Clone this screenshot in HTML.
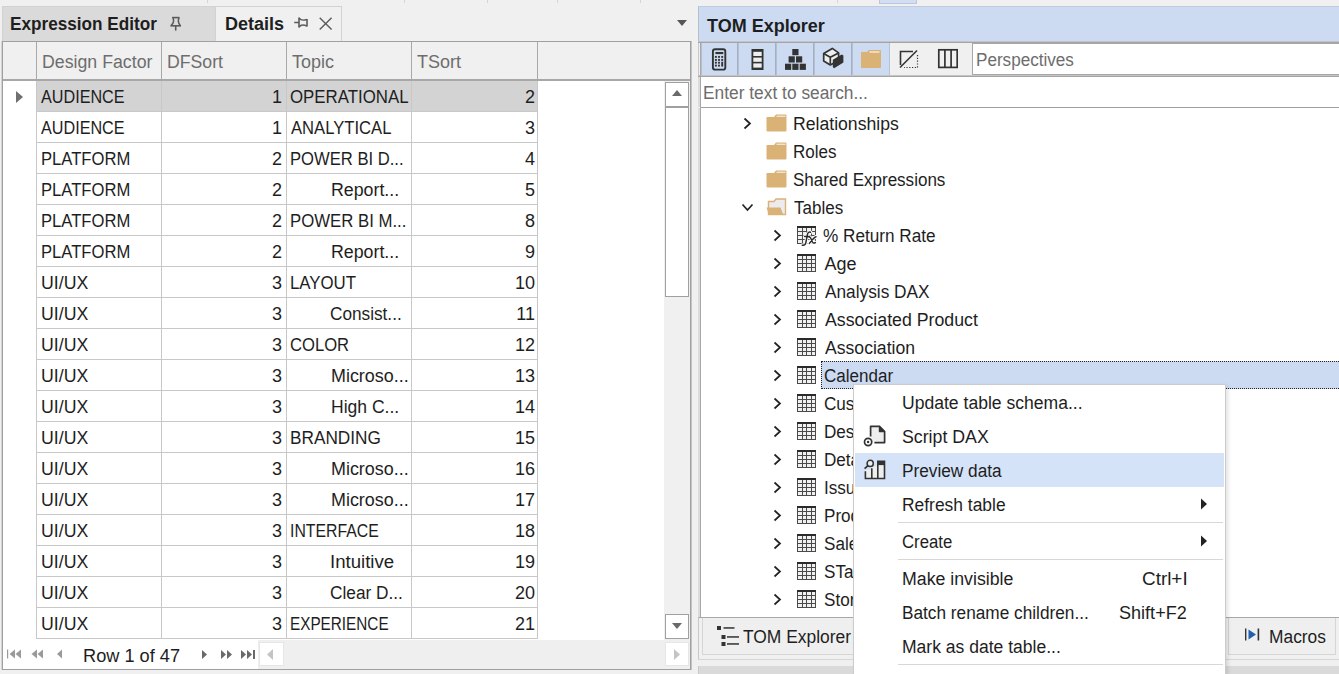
<!DOCTYPE html><html><head><meta charset="utf-8"><style>
*{box-sizing:border-box}
html,body{margin:0;padding:0}
body{width:1339px;height:674px;overflow:hidden;position:relative;background:#f0f0f0;font-family:"Liberation Sans", sans-serif;font-size:18px;color:#1e1e1e}
.ab{position:absolute}
.t{position:absolute;white-space:nowrap;line-height:30px;height:30px;margin-top:1px}
.hl{position:absolute;height:1px;background:#c8c8c8}
.vl{position:absolute;width:1px;background:#c8c8c8}
</style></head><body>

<div class="ab" style="left:207px;top:0;width:1px;height:3px;background:#d6d6d6"></div>
<div class="ab" style="left:404px;top:0;width:1px;height:3px;background:#d6d6d6"></div>
<div class="ab" style="left:487px;top:0;width:1px;height:3px;background:#d6d6d6"></div>
<div class="ab" style="left:557px;top:0;width:1px;height:3px;background:#d6d6d6"></div>
<div class="ab" style="left:640px;top:0;width:1px;height:3px;background:#d6d6d6"></div>
<div class="ab" style="left:837px;top:0;width:1px;height:3px;background:#d6d6d6"></div>
<div class="ab" style="left:879px;top:0;width:38px;height:4px;background:#d3def3;border:1px solid #b9c6de;border-top:none"></div>
<div class="ab" style="left:2px;top:6px;width:214px;height:35px;background:#dadada;border:1px solid #d2d2d2;border-bottom:none"></div>
<div class="ab" style="left:215px;top:6px;width:127px;height:35px;background:#f0f0f0;border:1px solid #d2d2d2;border-bottom:none"></div>
<div class="t" style="left:10.0px;top:8px;font-weight:bold;transform:scaleX(0.9542);transform-origin:0 0">Expression Editor</div>
<div class="t" style="left:225.0px;top:8px;font-weight:bold">Details</div>
<svg class="ab" style="left:168px;top:14px" width="16" height="18" viewBox="0 0 16 18"><path d="M4.1 3.6H11.6" stroke="#5a5a5a" stroke-width="1.6"/><path d="M5 4Q6.8 8 3.2 11.4M11 4Q9.2 8 12.3 11.4" fill="none" stroke="#5a5a5a" stroke-width="1.5"/><path d="M2.4 11.8H13" stroke="#5a5a5a" stroke-width="1.6"/><path d="M7.7 12V16.6" stroke="#5a5a5a" stroke-width="1.6"/></svg>
<svg class="ab" style="left:292px;top:14px" width="18" height="16" viewBox="0 0 18 16"><path d="M2.2 8.5H7" stroke="#5a5a5a" stroke-width="1.5"/><path d="M7 3.5V13.6" stroke="#5a5a5a" stroke-width="1.6"/><path d="M7 4Q9.5 7.5 15 5.3M7 13.2Q9.5 9.5 15 12.2" fill="none" stroke="#5a5a5a" stroke-width="1.4"/><path d="M15 5V12.5" stroke="#5a5a5a" stroke-width="1.6"/></svg>
<svg class="ab" style="left:318px;top:16px" width="16" height="16" viewBox="0 0 16 16"><path d="M1.7 1.7L13.6 13.5M13.6 1.7L1.7 13.5" stroke="#5a5a5a" stroke-width="1.4" fill="none"/></svg>
<svg class="ab" style="left:676px;top:19px" width="12" height="8" viewBox="0 0 12 8"><path d="M1 1h10L6 7z" fill="#555"/></svg>
<div class="ab" style="left:2px;top:41px;width:689px;height:629px;background:#ffffff;border:1px solid #a0a0a0;border-width:1px 1px 2px 1px;box-shadow:-1px 0 0 #d4d4d4, 1px 0 0 #c4c4c4"></div>
<div class="ab" style="left:3px;top:42px;width:687px;height:38px;background:#f0f0f0"></div>
<div class="ab" style="left:3px;top:79px;width:534px;height:2px;background:#a8a8a8"></div>
<div class="ab" style="left:537px;top:79px;width:153px;height:2px;background:#a8a8a8"></div>
<div class="ab" style="left:36px;top:42px;width:1px;height:38px;background:#a8a8a8"></div>
<div class="ab" style="left:161px;top:42px;width:1px;height:38px;background:#a8a8a8"></div>
<div class="ab" style="left:286px;top:42px;width:1px;height:38px;background:#a8a8a8"></div>
<div class="ab" style="left:411px;top:42px;width:1px;height:38px;background:#a8a8a8"></div>
<div class="ab" style="left:537px;top:42px;width:1px;height:38px;background:#a8a8a8"></div>
<div class="t" style="left:42.0px;top:46px;color:#6d6d6d;transform:scaleX(0.9855);transform-origin:0 0">Design Factor</div>
<div class="t" style="left:167.0px;top:46px;color:#6d6d6d;transform:scaleX(0.9818);transform-origin:0 0">DFSort</div>
<div class="t" style="left:292px;top:46px;color:#6d6d6d">Topic</div>
<div class="t" style="left:417px;top:46px;color:#6d6d6d">TSort</div>
<div class="ab" style="left:3px;top:81px;width:662px;height:559px;overflow:hidden">
<div class="ab" style="left:34px;top:0px;width:501px;height:30px;background:#d3d3d3"></div>
<div class="ab" style="left:33px;top:30px;width:501px;height:1px;background:#c8c8c8"></div>
<div class="t" style="left:38.0px;top:0px;;transform:scaleX(0.8984);transform-origin:0 0">AUDIENCE</div>
<div class="t" style="left:159px;top:0px;width:120px;text-align:right">1</div>
<div class="t" style="left:287.0px;top:0px;;transform:scaleX(0.936);transform-origin:0 0">OPERATIONAL</div>
<div class="t" style="left:409px;top:0px;width:123px;text-align:right">2</div>
<div class="ab" style="left:33px;top:61px;width:501px;height:1px;background:#c8c8c8"></div>
<div class="t" style="left:38.0px;top:31px;;transform:scaleX(0.8984);transform-origin:0 0">AUDIENCE</div>
<div class="t" style="left:159px;top:31px;width:120px;text-align:right">1</div>
<div class="t" style="left:288.0px;top:31px;;transform:scaleX(0.9237);transform-origin:0 0">ANALYTICAL</div>
<div class="t" style="left:409px;top:31px;width:123px;text-align:right">3</div>
<div class="ab" style="left:33px;top:92px;width:501px;height:1px;background:#c8c8c8"></div>
<div class="t" style="left:38.0px;top:62px;;transform:scaleX(0.9242);transform-origin:0 0">PLATFORM</div>
<div class="t" style="left:159px;top:62px;width:120px;text-align:right">2</div>
<div class="t" style="left:287.0px;top:62px;;transform:scaleX(0.9234);transform-origin:0 0">POWER BI D...</div>
<div class="t" style="left:409px;top:62px;width:123px;text-align:right">4</div>
<div class="ab" style="left:33px;top:123px;width:501px;height:1px;background:#c8c8c8"></div>
<div class="t" style="left:38.0px;top:93px;;transform:scaleX(0.9242);transform-origin:0 0">PLATFORM</div>
<div class="t" style="left:159px;top:93px;width:120px;text-align:right">2</div>
<div class="t" style="left:328.0px;top:93px;;transform:scaleX(0.9879);transform-origin:0 0">Report...</div>
<div class="t" style="left:409px;top:93px;width:123px;text-align:right">5</div>
<div class="ab" style="left:33px;top:154px;width:501px;height:1px;background:#c8c8c8"></div>
<div class="t" style="left:38.0px;top:124px;;transform:scaleX(0.9242);transform-origin:0 0">PLATFORM</div>
<div class="t" style="left:159px;top:124px;width:120px;text-align:right">2</div>
<div class="t" style="left:287.0px;top:124px;;transform:scaleX(0.9314);transform-origin:0 0">POWER BI M...</div>
<div class="t" style="left:409px;top:124px;width:123px;text-align:right">8</div>
<div class="ab" style="left:33px;top:185px;width:501px;height:1px;background:#c8c8c8"></div>
<div class="t" style="left:38.0px;top:155px;;transform:scaleX(0.9242);transform-origin:0 0">PLATFORM</div>
<div class="t" style="left:159px;top:155px;width:120px;text-align:right">2</div>
<div class="t" style="left:328.0px;top:155px;;transform:scaleX(0.9879);transform-origin:0 0">Report...</div>
<div class="t" style="left:409px;top:155px;width:123px;text-align:right">9</div>
<div class="ab" style="left:33px;top:216px;width:501px;height:1px;background:#c8c8c8"></div>
<div class="t" style="left:38.0px;top:186px;;transform:scaleX(0.9842);transform-origin:0 0">UI/UX</div>
<div class="t" style="left:159px;top:186px;width:120px;text-align:right">3</div>
<div class="t" style="left:287.0px;top:186px;;transform:scaleX(0.9344);transform-origin:0 0">LAYOUT</div>
<div class="t" style="left:409px;top:186px;width:123px;text-align:right">10</div>
<div class="ab" style="left:33px;top:247px;width:501px;height:1px;background:#c8c8c8"></div>
<div class="t" style="left:38.0px;top:217px;;transform:scaleX(0.9842);transform-origin:0 0">UI/UX</div>
<div class="t" style="left:159px;top:217px;width:120px;text-align:right">3</div>
<div class="t" style="left:327.0px;top:217px;;transform:scaleX(0.9556);transform-origin:0 0">Consist...</div>
<div class="t" style="left:409px;top:217px;width:123px;text-align:right">11</div>
<div class="ab" style="left:33px;top:278px;width:501px;height:1px;background:#c8c8c8"></div>
<div class="t" style="left:38.0px;top:248px;;transform:scaleX(0.9842);transform-origin:0 0">UI/UX</div>
<div class="t" style="left:159px;top:248px;width:120px;text-align:right">3</div>
<div class="t" style="left:287.0px;top:248px;;transform:scaleX(0.9233);transform-origin:0 0">COLOR</div>
<div class="t" style="left:409px;top:248px;width:123px;text-align:right">12</div>
<div class="ab" style="left:33px;top:309px;width:501px;height:1px;background:#c8c8c8"></div>
<div class="t" style="left:38.0px;top:279px;;transform:scaleX(0.9842);transform-origin:0 0">UI/UX</div>
<div class="t" style="left:159px;top:279px;width:120px;text-align:right">3</div>
<div class="t" style="left:328.0px;top:279px;;transform:scaleX(0.9948);transform-origin:0 0">Microso...</div>
<div class="t" style="left:409px;top:279px;width:123px;text-align:right">13</div>
<div class="ab" style="left:33px;top:340px;width:501px;height:1px;background:#c8c8c8"></div>
<div class="t" style="left:38.0px;top:310px;;transform:scaleX(0.9842);transform-origin:0 0">UI/UX</div>
<div class="t" style="left:159px;top:310px;width:120px;text-align:right">3</div>
<div class="t" style="left:328.0px;top:310px;;transform:scaleX(0.9732);transform-origin:0 0">High C...</div>
<div class="t" style="left:409px;top:310px;width:123px;text-align:right">14</div>
<div class="ab" style="left:33px;top:371px;width:501px;height:1px;background:#c8c8c8"></div>
<div class="t" style="left:38.0px;top:341px;;transform:scaleX(0.9842);transform-origin:0 0">UI/UX</div>
<div class="t" style="left:159px;top:341px;width:120px;text-align:right">3</div>
<div class="t" style="left:287.0px;top:341px;;transform:scaleX(0.9568);transform-origin:0 0">BRANDING</div>
<div class="t" style="left:409px;top:341px;width:123px;text-align:right">15</div>
<div class="ab" style="left:33px;top:402px;width:501px;height:1px;background:#c8c8c8"></div>
<div class="t" style="left:38.0px;top:372px;;transform:scaleX(0.9842);transform-origin:0 0">UI/UX</div>
<div class="t" style="left:159px;top:372px;width:120px;text-align:right">3</div>
<div class="t" style="left:328.0px;top:372px;;transform:scaleX(0.9948);transform-origin:0 0">Microso...</div>
<div class="t" style="left:409px;top:372px;width:123px;text-align:right">16</div>
<div class="ab" style="left:33px;top:433px;width:501px;height:1px;background:#c8c8c8"></div>
<div class="t" style="left:38.0px;top:403px;;transform:scaleX(0.9842);transform-origin:0 0">UI/UX</div>
<div class="t" style="left:159px;top:403px;width:120px;text-align:right">3</div>
<div class="t" style="left:328.0px;top:403px;;transform:scaleX(0.9948);transform-origin:0 0">Microso...</div>
<div class="t" style="left:409px;top:403px;width:123px;text-align:right">17</div>
<div class="ab" style="left:33px;top:464px;width:501px;height:1px;background:#c8c8c8"></div>
<div class="t" style="left:38.0px;top:434px;;transform:scaleX(0.9842);transform-origin:0 0">UI/UX</div>
<div class="t" style="left:159px;top:434px;width:120px;text-align:right">3</div>
<div class="t" style="left:287.0px;top:434px;;transform:scaleX(0.8793);transform-origin:0 0">INTERFACE</div>
<div class="t" style="left:409px;top:434px;width:123px;text-align:right">18</div>
<div class="ab" style="left:33px;top:495px;width:501px;height:1px;background:#c8c8c8"></div>
<div class="t" style="left:38.0px;top:465px;;transform:scaleX(0.9842);transform-origin:0 0">UI/UX</div>
<div class="t" style="left:159px;top:465px;width:120px;text-align:right">3</div>
<div class="t" style="left:327.0px;top:465px;;transform:scaleX(1.034);transform-origin:0 0">Intuitive</div>
<div class="t" style="left:409px;top:465px;width:123px;text-align:right">19</div>
<div class="ab" style="left:33px;top:526px;width:501px;height:1px;background:#c8c8c8"></div>
<div class="t" style="left:38.0px;top:496px;;transform:scaleX(0.9842);transform-origin:0 0">UI/UX</div>
<div class="t" style="left:159px;top:496px;width:120px;text-align:right">3</div>
<div class="t" style="left:327.0px;top:496px;;transform:scaleX(0.959);transform-origin:0 0">Clear D...</div>
<div class="t" style="left:409px;top:496px;width:123px;text-align:right">20</div>
<div class="ab" style="left:33px;top:557px;width:501px;height:1px;background:#c8c8c8"></div>
<div class="t" style="left:38.0px;top:527px;;transform:scaleX(0.9842);transform-origin:0 0">UI/UX</div>
<div class="t" style="left:159px;top:527px;width:120px;text-align:right">3</div>
<div class="t" style="left:287.0px;top:527px;;transform:scaleX(0.8499);transform-origin:0 0">EXPERIENCE</div>
<div class="t" style="left:409px;top:527px;width:123px;text-align:right">21</div>
<div class="ab" style="left:33px;top:0;width:1px;height:558px;background:#c8c8c8"></div>
<div class="ab" style="left:158px;top:0;width:1px;height:558px;background:#c8c8c8"></div>
<div class="ab" style="left:283px;top:0;width:1px;height:558px;background:#c8c8c8"></div>
<div class="ab" style="left:408px;top:0;width:1px;height:558px;background:#c8c8c8"></div>
<div class="ab" style="left:534px;top:0;width:1px;height:558px;background:#c8c8c8"></div>
</div>
<svg class="ab" style="left:16px;top:91px" width="7" height="12" viewBox="0 0 7 12"><path d="M0 0L7 6L0 12z" fill="#707070"/></svg>
<div class="ab" style="left:664px;top:81px;width:26px;height:559px;background:#f0f0f0"></div>
<div class="ab" style="left:665px;top:82px;width:24px;height:25px;background:#fff;border:1px solid #a0a0a0"></div>
<svg class="ab" style="left:672px;top:90px" width="10" height="6" viewBox="0 0 10 6"><path d="M0 6L5 0L10 6z" fill="#6a6a6a"/></svg>
<div class="ab" style="left:665px;top:107px;width:24px;height:190px;background:#fff;border:1px solid #a0a0a0"></div>
<div class="ab" style="left:665px;top:614px;width:24px;height:25px;background:#fff;border:1px solid #a0a0a0"></div>
<svg class="ab" style="left:672px;top:623px" width="10" height="6" viewBox="0 0 10 6"><path d="M0 0L5 6L10 0z" fill="#6a6a6a"/></svg>
<div class="ab" style="left:3px;top:640px;width:255px;height:29px;background:#ffffff"></div>
<div class="ab" style="left:258px;top:640px;width:432px;height:29px;background:#efefef"></div>
<div class="ab" style="left:259px;top:642px;width:25px;height:24px;background:#fff;border:1px solid #e6e6e6"></div>
<svg class="ab" style="left:267px;top:649px" width="6" height="11" viewBox="0 0 6 11"><path d="M6 0L0 5.5L6 11z" fill="#c4c4c4"/></svg>
<div class="ab" style="left:665px;top:642px;width:24px;height:24px;background:#fff;border:1px solid #e6e6e6"></div>
<svg class="ab" style="left:674px;top:649px" width="6" height="11" viewBox="0 0 6 11"><path d="M0 0L6 5.5L0 11z" fill="#c4c4c4"/></svg>
<svg class="ab" style="left:6px;top:649px" width="60" height="12" viewBox="0 0 60 12">
<g fill="#9a9a9a"><rect x="1" y="0.5" width="1.2" height="9"/><path d="M9 0.5L3.5 5L9 9.5z"/><path d="M15 0.5L9.5 5L15 9.5z"/>
<path d="M31 0.5L25.5 5L31 9.5z"/><path d="M37 0.5L31.5 5L37 9.5z"/>
<path d="M56 0.5L51 5L56 9.5z"/></g></svg>
<div class="t" style="left:83.0px;top:640px;;transform:scaleX(1.0106);transform-origin:0 0">Row 1 of 47</div>
<svg class="ab" style="left:200px;top:649px" width="58" height="12" viewBox="0 0 58 12">
<g fill="#6a6a6a"><path d="M2 1L7 5.5L2 10z"/><path d="M21 1L26 5.5L21 10z"/><path d="M27 1L32 5.5L27 10z"/>
<path d="M41 1L46 5.5L41 10z"/><path d="M47 1L52 5.5L47 10z"/><rect x="53" y="1" width="2" height="9"/></g></svg>
<div class="ab" style="left:698px;top:6px;width:641px;height:36px;background:#ccdbf2;border-left:1px solid #b4bfd2;border-top:1px solid #c0cbe0"></div>
<div class="t" style="left:707.0px;top:10px;font-weight:bold">TOM Explorer</div>
<div class="ab" style="left:698px;top:41px;width:641px;height:1px;background:#c4c4c4"></div>
<div class="ab" style="left:698px;top:42px;width:641px;height:1px;background:#a4a4a4"></div>
<div class="ab" style="left:698px;top:43px;width:641px;height:33px;background:#f0f0f0;border-left:1px solid #c8c8c8"></div>
<div class="ab" style="left:700px;top:43px;width:190px;height:33px;background:#ccdbf2"></div>
<div class="ab" style="left:700px;top:43px;width:2px;height:33px;background:#b4bfd2"></div>
<div class="ab" style="left:700px;top:43px;width:1px;height:33px;background:#a4afc2"></div>
<div class="ab" style="left:737px;top:43px;width:2px;height:33px;background:#b4bfd2"></div>
<div class="ab" style="left:737px;top:43px;width:1px;height:33px;background:#a4afc2"></div>
<div class="ab" style="left:775px;top:43px;width:2px;height:33px;background:#b4bfd2"></div>
<div class="ab" style="left:775px;top:43px;width:1px;height:33px;background:#a4afc2"></div>
<div class="ab" style="left:813px;top:43px;width:2px;height:33px;background:#b4bfd2"></div>
<div class="ab" style="left:813px;top:43px;width:1px;height:33px;background:#a4afc2"></div>
<div class="ab" style="left:851px;top:43px;width:2px;height:33px;background:#b4bfd2"></div>
<div class="ab" style="left:851px;top:43px;width:1px;height:33px;background:#a4afc2"></div>
<div class="ab" style="left:889px;top:43px;width:1px;height:33px;background:#b6c2d6"></div>
<div class="ab" style="left:698px;top:75px;width:641px;height:1px;background:#c4c4c4"></div>
<div class="ab" style="left:698px;top:76px;width:641px;height:1px;background:#a4a4a4"></div>
<div class="ab" style="left:972px;top:43px;width:380px;height:32px;background:#fff;border:1px solid #a8a8a8"></div>
<div class="t" style="left:976.0px;top:44px;color:#6d6d6d;transform:scaleX(0.95);transform-origin:0 0">Perspectives</div>
<svg class="ab" style="left:710px;top:47px" width="18" height="25" viewBox="0 0 18 25">
<rect x="2.9" y="2.2" width="12.4" height="20.4" rx="2.2" fill="none" stroke="#333" stroke-width="1.9"/>
<rect x="5.4" y="5" width="7.9" height="2.1" fill="#333"/>
<g fill="#333"><rect x="4.95" y="8.95" width="1.9" height="1.9"/><rect x="4.95" y="11.95" width="1.9" height="1.9"/><rect x="4.95" y="14.75" width="1.9" height="1.9"/><rect x="4.95" y="17.65" width="1.9" height="1.9"/><rect x="8.05" y="8.95" width="1.9" height="1.9"/><rect x="8.05" y="11.95" width="1.9" height="1.9"/><rect x="8.05" y="14.75" width="1.9" height="1.9"/><rect x="8.05" y="17.65" width="1.9" height="1.9"/><rect x="11.25" y="8.95" width="1.9" height="1.9"/><rect x="11.25" y="11.95" width="1.9" height="1.9"/><rect x="11.25" y="14.75" width="1.9" height="4.8"/></g></svg>
<svg class="ab" style="left:749px;top:47px" width="17" height="25" viewBox="0 0 17 25">
<rect x="2.5" y="2" width="12" height="21" fill="#333"/>
<rect x="4.3" y="4.8" width="8.4" height="4.2" fill="#eeeeee"/><rect x="4.3" y="10.6" width="8.4" height="4.2" fill="#eeeeee"/><rect x="4.3" y="16.4" width="8.4" height="4.2" fill="#eeeeee"/></svg>
<svg class="ab" style="left:782px;top:47px" width="26" height="25" viewBox="0 0 26 25">
<g fill="#333"><rect x="10.3" y="2" width="6.2" height="6.2"/><rect x="6.6" y="9.3" width="6.2" height="6.2"/><rect x="14" y="9.3" width="6.2" height="6.2"/>
<rect x="3" y="16.7" width="6.2" height="6.2"/><rect x="10.3" y="16.7" width="6.2" height="6.2"/><rect x="17.7" y="16.7" width="6.2" height="6.2"/></g></svg>
<svg class="ab" style="left:821px;top:46px" width="24" height="24" viewBox="0 0 24 24">
<path d="M2.7 7.6L11.3 2.4L17.6 6.9V14.5L9.3 19L2.7 15.1z" fill="#eeeeee" stroke="#333" stroke-width="1.7" stroke-linejoin="round"/>
<path d="M2.7 7.6L9.3 11.3L17.6 6.9M9.3 11.3V19" fill="none" stroke="#333" stroke-width="1.7"/>
<path d="M11.8 13.8L20.7 8.6L22.4 9.5V16.4L13.1 22.2L11.8 21.1z" fill="#333"/></svg>
<svg class="ab" style="left:859px;top:49px" width="24" height="21" viewBox="0 0 24 21">
<path d="M2 4Q2 3 3 3H8L10 1H21Q22 1 22 2V18Q22 19 21 19H3Q2 19 2 18z" fill="#dab276"/><rect x="10.5" y="2.2" width="10" height="1.6" fill="#f0e4d0"/></svg>
<svg class="ab" style="left:898px;top:48px" width="22" height="22" viewBox="0 0 22 22">
<path d="M2.5 17V3.5H15" fill="none" stroke="#333" stroke-width="1.6"/><path d="M2 19.5L19 2.5" stroke="#333" stroke-width="1.6"/>
<path d="M19.5 7V19.5H6" fill="none" stroke="#333" stroke-width="1.2" stroke-dasharray="1.2 1.6"/></svg>
<svg class="ab" style="left:936px;top:47px" width="22" height="23" viewBox="0 0 22 23">
<rect x="2.8" y="2.8" width="18.4" height="17.6" fill="none" stroke="#333" stroke-width="1.7"/><path d="M8.9 3V20.5M15.1 3V20.5" stroke="#333" stroke-width="1.7"/></svg>
<div class="ab" style="left:698px;top:77px;width:641px;height:30px;background:#fff;border-left:2px solid #dcdcdc"></div>
<div class="t" style="left:703.0px;top:77px;color:#6d6d6d;transform:scaleX(0.9641);transform-origin:0 0">Enter text to search...</div>
<div class="ab" style="left:700px;top:107px;width:639px;height:1px;background:#a0a0a0"></div>
<div class="ab" style="left:700px;top:108px;width:639px;height:1px;background:#b4b4b4"></div>
<div class="ab" style="left:698px;top:108px;width:641px;height:509px;background:#fff;border-left:2px solid #dcdcdc"></div>
<div class="ab" style="left:821px;top:361px;width:520px;height:28px;background:#ccdbf2;border:1px dotted #222;border-right:none"></div>
<svg class="ab" style="left:743px;top:117px" width="9" height="13" viewBox="0 0 9 13"><path d="M1.5 1.5L7 6.5L1.5 11.5" fill="none" stroke="#222" stroke-width="1.7"/></svg>
<svg class="ab" style="left:766px;top:114px" width="21" height="18" viewBox="0 0 21 18"><path d="M0.5 3.5Q0.5 3 1 3H8L10 0.5H19.5Q20.5 0.5 20.5 1.5V16.5Q20.5 17.5 19.5 17.5H1.5Q0.5 17.5 0.5 16.5z" fill="#dab276"/><rect x="10.5" y="1.6" width="9" height="1.4" fill="#f0e4d0"/></svg>
<div class="t" style="left:793.0px;top:108px;;transform:scaleX(0.9793);transform-origin:0 0">Relationships</div>
<svg class="ab" style="left:766px;top:142px" width="21" height="18" viewBox="0 0 21 18"><path d="M0.5 3.5Q0.5 3 1 3H8L10 0.5H19.5Q20.5 0.5 20.5 1.5V16.5Q20.5 17.5 19.5 17.5H1.5Q0.5 17.5 0.5 16.5z" fill="#dab276"/><rect x="10.5" y="1.6" width="9" height="1.4" fill="#f0e4d0"/></svg>
<div class="t" style="left:793.0px;top:136px;;transform:scaleX(0.9455);transform-origin:0 0">Roles</div>
<svg class="ab" style="left:766px;top:170px" width="21" height="18" viewBox="0 0 21 18"><path d="M0.5 3.5Q0.5 3 1 3H8L10 0.5H19.5Q20.5 0.5 20.5 1.5V16.5Q20.5 17.5 19.5 17.5H1.5Q0.5 17.5 0.5 16.5z" fill="#dab276"/><rect x="10.5" y="1.6" width="9" height="1.4" fill="#f0e4d0"/></svg>
<div class="t" style="left:793.0px;top:164px;;transform:scaleX(0.9459);transform-origin:0 0">Shared Expressions</div>
<svg class="ab" style="left:741px;top:203px" width="13" height="9" viewBox="0 0 13 9"><path d="M1.5 1.5L6.5 7L11.5 1.5" fill="none" stroke="#222" stroke-width="1.7"/></svg>
<svg class="ab" style="left:766px;top:198px" width="21" height="18" viewBox="0 0 21 18"><path d="M2.5 16.5V3.5H8L10 1H19.5V16.5z" fill="#ecebef" stroke="#dab276" stroke-width="1.4"/><path d="M0.5 9.5H14.5L17.5 17H3z" fill="#dab276"/></svg>
<div class="t" style="left:794.0px;top:192px;;transform:scaleX(0.9454);transform-origin:0 0">Tables</div>
<svg class="ab" style="left:773px;top:229px" width="9" height="13" viewBox="0 0 9 13"><path d="M1.5 1.5L7 6.5L1.5 11.5" fill="none" stroke="#222" stroke-width="1.7"/></svg>
<svg class="ab" style="left:797px;top:226px" width="23" height="21" viewBox="0 0 23 21"><rect x="0" y="0" width="19" height="18" fill="#4a4a4a"/><rect x="0" y="0" width="19" height="2" fill="#2a2a2a"/><rect x="1" y="2" width="4" height="3" fill="#f0f0f0"/><rect x="1" y="6" width="4" height="3" fill="#f0f0f0"/><rect x="1" y="10" width="4" height="3" fill="#f0f0f0"/><rect x="1" y="14" width="4" height="3" fill="#f0f0f0"/><rect x="6" y="2" width="3" height="3" fill="#f0f0f0"/><rect x="6" y="6" width="3" height="3" fill="#f0f0f0"/><rect x="6" y="10" width="3" height="3" fill="#f0f0f0"/><rect x="6" y="14" width="3" height="3" fill="#f0f0f0"/><rect x="10" y="2" width="4" height="3" fill="#f0f0f0"/><rect x="10" y="6" width="4" height="3" fill="#f0f0f0"/><rect x="10" y="10" width="4" height="3" fill="#f0f0f0"/><rect x="10" y="14" width="4" height="3" fill="#f0f0f0"/><rect x="15" y="2" width="3" height="3" fill="#f0f0f0"/><rect x="15" y="6" width="3" height="3" fill="#f0f0f0"/><rect x="15" y="10" width="3" height="3" fill="#f0f0f0"/><rect x="15" y="14" width="3" height="3" fill="#f0f0f0"/><path d="M13.5 6.2Q11 5.6 10.4 8.6L8.8 16.8Q8.2 19.6 5.2 19.2M7.6 10.6H12.4M11.2 10.8Q13.2 10.2 14.2 13L15.4 16Q16.4 17.8 18.4 16.6M19 10.8Q17.4 11 12.4 17.4" fill="none" stroke="#fff" stroke-width="3.4" stroke-linecap="round"/><path d="M13.5 6.2Q11 5.6 10.4 8.6L8.8 16.8Q8.2 19.6 5.2 19.2M7.6 10.6H12.4M11.2 10.8Q13.2 10.2 14.2 13L15.4 16Q16.4 17.8 18.4 16.6M19 10.8Q17.4 11 12.4 17.4" fill="none" stroke="#2a2a2a" stroke-width="1.5" stroke-linecap="round"/></svg>
<div class="t" style="left:823.0px;top:220px;;transform:scaleX(0.9535);transform-origin:0 0">% Return Rate</div>
<svg class="ab" style="left:773px;top:257px" width="9" height="13" viewBox="0 0 9 13"><path d="M1.5 1.5L7 6.5L1.5 11.5" fill="none" stroke="#222" stroke-width="1.7"/></svg>
<svg class="ab" style="left:797px;top:254px" width="23" height="21" viewBox="0 0 23 21"><rect x="0" y="0" width="19" height="18" fill="#4a4a4a"/><rect x="0" y="0" width="19" height="2" fill="#2a2a2a"/><rect x="1" y="2" width="4" height="3" fill="#f0f0f0"/><rect x="1" y="6" width="4" height="3" fill="#f0f0f0"/><rect x="1" y="10" width="4" height="3" fill="#f0f0f0"/><rect x="1" y="14" width="4" height="3" fill="#f0f0f0"/><rect x="6" y="2" width="3" height="3" fill="#f0f0f0"/><rect x="6" y="6" width="3" height="3" fill="#f0f0f0"/><rect x="6" y="10" width="3" height="3" fill="#f0f0f0"/><rect x="6" y="14" width="3" height="3" fill="#f0f0f0"/><rect x="10" y="2" width="4" height="3" fill="#f0f0f0"/><rect x="10" y="6" width="4" height="3" fill="#f0f0f0"/><rect x="10" y="10" width="4" height="3" fill="#f0f0f0"/><rect x="10" y="14" width="4" height="3" fill="#f0f0f0"/><rect x="15" y="2" width="3" height="3" fill="#f0f0f0"/><rect x="15" y="6" width="3" height="3" fill="#f0f0f0"/><rect x="15" y="10" width="3" height="3" fill="#f0f0f0"/><rect x="15" y="14" width="3" height="3" fill="#f0f0f0"/></svg>
<div class="t" style="left:824.5px;top:248px;">Age</div>
<svg class="ab" style="left:773px;top:285px" width="9" height="13" viewBox="0 0 9 13"><path d="M1.5 1.5L7 6.5L1.5 11.5" fill="none" stroke="#222" stroke-width="1.7"/></svg>
<svg class="ab" style="left:797px;top:282px" width="23" height="21" viewBox="0 0 23 21"><rect x="0" y="0" width="19" height="18" fill="#4a4a4a"/><rect x="0" y="0" width="19" height="2" fill="#2a2a2a"/><rect x="1" y="2" width="4" height="3" fill="#f0f0f0"/><rect x="1" y="6" width="4" height="3" fill="#f0f0f0"/><rect x="1" y="10" width="4" height="3" fill="#f0f0f0"/><rect x="1" y="14" width="4" height="3" fill="#f0f0f0"/><rect x="6" y="2" width="3" height="3" fill="#f0f0f0"/><rect x="6" y="6" width="3" height="3" fill="#f0f0f0"/><rect x="6" y="10" width="3" height="3" fill="#f0f0f0"/><rect x="6" y="14" width="3" height="3" fill="#f0f0f0"/><rect x="10" y="2" width="4" height="3" fill="#f0f0f0"/><rect x="10" y="6" width="4" height="3" fill="#f0f0f0"/><rect x="10" y="10" width="4" height="3" fill="#f0f0f0"/><rect x="10" y="14" width="4" height="3" fill="#f0f0f0"/><rect x="15" y="2" width="3" height="3" fill="#f0f0f0"/><rect x="15" y="6" width="3" height="3" fill="#f0f0f0"/><rect x="15" y="10" width="3" height="3" fill="#f0f0f0"/><rect x="15" y="14" width="3" height="3" fill="#f0f0f0"/></svg>
<div class="t" style="left:824.5px;top:276px;;transform:scaleX(0.9593);transform-origin:0 0">Analysis DAX</div>
<svg class="ab" style="left:773px;top:313px" width="9" height="13" viewBox="0 0 9 13"><path d="M1.5 1.5L7 6.5L1.5 11.5" fill="none" stroke="#222" stroke-width="1.7"/></svg>
<svg class="ab" style="left:797px;top:310px" width="23" height="21" viewBox="0 0 23 21"><rect x="0" y="0" width="19" height="18" fill="#4a4a4a"/><rect x="0" y="0" width="19" height="2" fill="#2a2a2a"/><rect x="1" y="2" width="4" height="3" fill="#f0f0f0"/><rect x="1" y="6" width="4" height="3" fill="#f0f0f0"/><rect x="1" y="10" width="4" height="3" fill="#f0f0f0"/><rect x="1" y="14" width="4" height="3" fill="#f0f0f0"/><rect x="6" y="2" width="3" height="3" fill="#f0f0f0"/><rect x="6" y="6" width="3" height="3" fill="#f0f0f0"/><rect x="6" y="10" width="3" height="3" fill="#f0f0f0"/><rect x="6" y="14" width="3" height="3" fill="#f0f0f0"/><rect x="10" y="2" width="4" height="3" fill="#f0f0f0"/><rect x="10" y="6" width="4" height="3" fill="#f0f0f0"/><rect x="10" y="10" width="4" height="3" fill="#f0f0f0"/><rect x="10" y="14" width="4" height="3" fill="#f0f0f0"/><rect x="15" y="2" width="3" height="3" fill="#f0f0f0"/><rect x="15" y="6" width="3" height="3" fill="#f0f0f0"/><rect x="15" y="10" width="3" height="3" fill="#f0f0f0"/><rect x="15" y="14" width="3" height="3" fill="#f0f0f0"/></svg>
<div class="t" style="left:824.5px;top:304px;;transform:scaleX(0.9858);transform-origin:0 0">Associated Product</div>
<svg class="ab" style="left:773px;top:341px" width="9" height="13" viewBox="0 0 9 13"><path d="M1.5 1.5L7 6.5L1.5 11.5" fill="none" stroke="#222" stroke-width="1.7"/></svg>
<svg class="ab" style="left:797px;top:338px" width="23" height="21" viewBox="0 0 23 21"><rect x="0" y="0" width="19" height="18" fill="#4a4a4a"/><rect x="0" y="0" width="19" height="2" fill="#2a2a2a"/><rect x="1" y="2" width="4" height="3" fill="#f0f0f0"/><rect x="1" y="6" width="4" height="3" fill="#f0f0f0"/><rect x="1" y="10" width="4" height="3" fill="#f0f0f0"/><rect x="1" y="14" width="4" height="3" fill="#f0f0f0"/><rect x="6" y="2" width="3" height="3" fill="#f0f0f0"/><rect x="6" y="6" width="3" height="3" fill="#f0f0f0"/><rect x="6" y="10" width="3" height="3" fill="#f0f0f0"/><rect x="6" y="14" width="3" height="3" fill="#f0f0f0"/><rect x="10" y="2" width="4" height="3" fill="#f0f0f0"/><rect x="10" y="6" width="4" height="3" fill="#f0f0f0"/><rect x="10" y="10" width="4" height="3" fill="#f0f0f0"/><rect x="10" y="14" width="4" height="3" fill="#f0f0f0"/><rect x="15" y="2" width="3" height="3" fill="#f0f0f0"/><rect x="15" y="6" width="3" height="3" fill="#f0f0f0"/><rect x="15" y="10" width="3" height="3" fill="#f0f0f0"/><rect x="15" y="14" width="3" height="3" fill="#f0f0f0"/></svg>
<div class="t" style="left:824.5px;top:332px;;transform:scaleX(0.978);transform-origin:0 0">Association</div>
<svg class="ab" style="left:773px;top:369px" width="9" height="13" viewBox="0 0 9 13"><path d="M1.5 1.5L7 6.5L1.5 11.5" fill="none" stroke="#222" stroke-width="1.7"/></svg>
<svg class="ab" style="left:797px;top:366px" width="23" height="21" viewBox="0 0 23 21"><rect x="0" y="0" width="19" height="18" fill="#4a4a4a"/><rect x="0" y="0" width="19" height="2" fill="#2a2a2a"/><rect x="1" y="2" width="4" height="3" fill="#f0f0f0"/><rect x="1" y="6" width="4" height="3" fill="#f0f0f0"/><rect x="1" y="10" width="4" height="3" fill="#f0f0f0"/><rect x="1" y="14" width="4" height="3" fill="#f0f0f0"/><rect x="6" y="2" width="3" height="3" fill="#f0f0f0"/><rect x="6" y="6" width="3" height="3" fill="#f0f0f0"/><rect x="6" y="10" width="3" height="3" fill="#f0f0f0"/><rect x="6" y="14" width="3" height="3" fill="#f0f0f0"/><rect x="10" y="2" width="4" height="3" fill="#f0f0f0"/><rect x="10" y="6" width="4" height="3" fill="#f0f0f0"/><rect x="10" y="10" width="4" height="3" fill="#f0f0f0"/><rect x="10" y="14" width="4" height="3" fill="#f0f0f0"/><rect x="15" y="2" width="3" height="3" fill="#f0f0f0"/><rect x="15" y="6" width="3" height="3" fill="#f0f0f0"/><rect x="15" y="10" width="3" height="3" fill="#f0f0f0"/><rect x="15" y="14" width="3" height="3" fill="#f0f0f0"/></svg>
<div class="t" style="left:823.5px;top:360px;;transform:scaleX(0.9453);transform-origin:0 0">Calendar</div>
<svg class="ab" style="left:773px;top:397px" width="9" height="13" viewBox="0 0 9 13"><path d="M1.5 1.5L7 6.5L1.5 11.5" fill="none" stroke="#222" stroke-width="1.7"/></svg>
<svg class="ab" style="left:797px;top:394px" width="23" height="21" viewBox="0 0 23 21"><rect x="0" y="0" width="19" height="18" fill="#4a4a4a"/><rect x="0" y="0" width="19" height="2" fill="#2a2a2a"/><rect x="1" y="2" width="4" height="3" fill="#f0f0f0"/><rect x="1" y="6" width="4" height="3" fill="#f0f0f0"/><rect x="1" y="10" width="4" height="3" fill="#f0f0f0"/><rect x="1" y="14" width="4" height="3" fill="#f0f0f0"/><rect x="6" y="2" width="3" height="3" fill="#f0f0f0"/><rect x="6" y="6" width="3" height="3" fill="#f0f0f0"/><rect x="6" y="10" width="3" height="3" fill="#f0f0f0"/><rect x="6" y="14" width="3" height="3" fill="#f0f0f0"/><rect x="10" y="2" width="4" height="3" fill="#f0f0f0"/><rect x="10" y="6" width="4" height="3" fill="#f0f0f0"/><rect x="10" y="10" width="4" height="3" fill="#f0f0f0"/><rect x="10" y="14" width="4" height="3" fill="#f0f0f0"/><rect x="15" y="2" width="3" height="3" fill="#f0f0f0"/><rect x="15" y="6" width="3" height="3" fill="#f0f0f0"/><rect x="15" y="10" width="3" height="3" fill="#f0f0f0"/><rect x="15" y="14" width="3" height="3" fill="#f0f0f0"/></svg>
<div class="t" style="left:824.0px;top:388px;;transform:scaleX(0.95);transform-origin:0 0">Customer</div>
<svg class="ab" style="left:773px;top:425px" width="9" height="13" viewBox="0 0 9 13"><path d="M1.5 1.5L7 6.5L1.5 11.5" fill="none" stroke="#222" stroke-width="1.7"/></svg>
<svg class="ab" style="left:797px;top:422px" width="23" height="21" viewBox="0 0 23 21"><rect x="0" y="0" width="19" height="18" fill="#4a4a4a"/><rect x="0" y="0" width="19" height="2" fill="#2a2a2a"/><rect x="1" y="2" width="4" height="3" fill="#f0f0f0"/><rect x="1" y="6" width="4" height="3" fill="#f0f0f0"/><rect x="1" y="10" width="4" height="3" fill="#f0f0f0"/><rect x="1" y="14" width="4" height="3" fill="#f0f0f0"/><rect x="6" y="2" width="3" height="3" fill="#f0f0f0"/><rect x="6" y="6" width="3" height="3" fill="#f0f0f0"/><rect x="6" y="10" width="3" height="3" fill="#f0f0f0"/><rect x="6" y="14" width="3" height="3" fill="#f0f0f0"/><rect x="10" y="2" width="4" height="3" fill="#f0f0f0"/><rect x="10" y="6" width="4" height="3" fill="#f0f0f0"/><rect x="10" y="10" width="4" height="3" fill="#f0f0f0"/><rect x="10" y="14" width="4" height="3" fill="#f0f0f0"/><rect x="15" y="2" width="3" height="3" fill="#f0f0f0"/><rect x="15" y="6" width="3" height="3" fill="#f0f0f0"/><rect x="15" y="10" width="3" height="3" fill="#f0f0f0"/><rect x="15" y="14" width="3" height="3" fill="#f0f0f0"/></svg>
<div class="t" style="left:824.0px;top:416px;;transform:scaleX(0.95);transform-origin:0 0">Design Factors</div>
<svg class="ab" style="left:773px;top:453px" width="9" height="13" viewBox="0 0 9 13"><path d="M1.5 1.5L7 6.5L1.5 11.5" fill="none" stroke="#222" stroke-width="1.7"/></svg>
<svg class="ab" style="left:797px;top:450px" width="23" height="21" viewBox="0 0 23 21"><rect x="0" y="0" width="19" height="18" fill="#4a4a4a"/><rect x="0" y="0" width="19" height="2" fill="#2a2a2a"/><rect x="1" y="2" width="4" height="3" fill="#f0f0f0"/><rect x="1" y="6" width="4" height="3" fill="#f0f0f0"/><rect x="1" y="10" width="4" height="3" fill="#f0f0f0"/><rect x="1" y="14" width="4" height="3" fill="#f0f0f0"/><rect x="6" y="2" width="3" height="3" fill="#f0f0f0"/><rect x="6" y="6" width="3" height="3" fill="#f0f0f0"/><rect x="6" y="10" width="3" height="3" fill="#f0f0f0"/><rect x="6" y="14" width="3" height="3" fill="#f0f0f0"/><rect x="10" y="2" width="4" height="3" fill="#f0f0f0"/><rect x="10" y="6" width="4" height="3" fill="#f0f0f0"/><rect x="10" y="10" width="4" height="3" fill="#f0f0f0"/><rect x="10" y="14" width="4" height="3" fill="#f0f0f0"/><rect x="15" y="2" width="3" height="3" fill="#f0f0f0"/><rect x="15" y="6" width="3" height="3" fill="#f0f0f0"/><rect x="15" y="10" width="3" height="3" fill="#f0f0f0"/><rect x="15" y="14" width="3" height="3" fill="#f0f0f0"/></svg>
<div class="t" style="left:824.0px;top:444px;;transform:scaleX(0.95);transform-origin:0 0">Details</div>
<svg class="ab" style="left:773px;top:481px" width="9" height="13" viewBox="0 0 9 13"><path d="M1.5 1.5L7 6.5L1.5 11.5" fill="none" stroke="#222" stroke-width="1.7"/></svg>
<svg class="ab" style="left:797px;top:478px" width="23" height="21" viewBox="0 0 23 21"><rect x="0" y="0" width="19" height="18" fill="#4a4a4a"/><rect x="0" y="0" width="19" height="2" fill="#2a2a2a"/><rect x="1" y="2" width="4" height="3" fill="#f0f0f0"/><rect x="1" y="6" width="4" height="3" fill="#f0f0f0"/><rect x="1" y="10" width="4" height="3" fill="#f0f0f0"/><rect x="1" y="14" width="4" height="3" fill="#f0f0f0"/><rect x="6" y="2" width="3" height="3" fill="#f0f0f0"/><rect x="6" y="6" width="3" height="3" fill="#f0f0f0"/><rect x="6" y="10" width="3" height="3" fill="#f0f0f0"/><rect x="6" y="14" width="3" height="3" fill="#f0f0f0"/><rect x="10" y="2" width="4" height="3" fill="#f0f0f0"/><rect x="10" y="6" width="4" height="3" fill="#f0f0f0"/><rect x="10" y="10" width="4" height="3" fill="#f0f0f0"/><rect x="10" y="14" width="4" height="3" fill="#f0f0f0"/><rect x="15" y="2" width="3" height="3" fill="#f0f0f0"/><rect x="15" y="6" width="3" height="3" fill="#f0f0f0"/><rect x="15" y="10" width="3" height="3" fill="#f0f0f0"/><rect x="15" y="14" width="3" height="3" fill="#f0f0f0"/></svg>
<div class="t" style="left:824.0px;top:472px;;transform:scaleX(0.95);transform-origin:0 0">Issues</div>
<svg class="ab" style="left:773px;top:509px" width="9" height="13" viewBox="0 0 9 13"><path d="M1.5 1.5L7 6.5L1.5 11.5" fill="none" stroke="#222" stroke-width="1.7"/></svg>
<svg class="ab" style="left:797px;top:506px" width="23" height="21" viewBox="0 0 23 21"><rect x="0" y="0" width="19" height="18" fill="#4a4a4a"/><rect x="0" y="0" width="19" height="2" fill="#2a2a2a"/><rect x="1" y="2" width="4" height="3" fill="#f0f0f0"/><rect x="1" y="6" width="4" height="3" fill="#f0f0f0"/><rect x="1" y="10" width="4" height="3" fill="#f0f0f0"/><rect x="1" y="14" width="4" height="3" fill="#f0f0f0"/><rect x="6" y="2" width="3" height="3" fill="#f0f0f0"/><rect x="6" y="6" width="3" height="3" fill="#f0f0f0"/><rect x="6" y="10" width="3" height="3" fill="#f0f0f0"/><rect x="6" y="14" width="3" height="3" fill="#f0f0f0"/><rect x="10" y="2" width="4" height="3" fill="#f0f0f0"/><rect x="10" y="6" width="4" height="3" fill="#f0f0f0"/><rect x="10" y="10" width="4" height="3" fill="#f0f0f0"/><rect x="10" y="14" width="4" height="3" fill="#f0f0f0"/><rect x="15" y="2" width="3" height="3" fill="#f0f0f0"/><rect x="15" y="6" width="3" height="3" fill="#f0f0f0"/><rect x="15" y="10" width="3" height="3" fill="#f0f0f0"/><rect x="15" y="14" width="3" height="3" fill="#f0f0f0"/></svg>
<div class="t" style="left:824.0px;top:500px;;transform:scaleX(0.95);transform-origin:0 0">Products</div>
<svg class="ab" style="left:773px;top:537px" width="9" height="13" viewBox="0 0 9 13"><path d="M1.5 1.5L7 6.5L1.5 11.5" fill="none" stroke="#222" stroke-width="1.7"/></svg>
<svg class="ab" style="left:797px;top:534px" width="23" height="21" viewBox="0 0 23 21"><rect x="0" y="0" width="19" height="18" fill="#4a4a4a"/><rect x="0" y="0" width="19" height="2" fill="#2a2a2a"/><rect x="1" y="2" width="4" height="3" fill="#f0f0f0"/><rect x="1" y="6" width="4" height="3" fill="#f0f0f0"/><rect x="1" y="10" width="4" height="3" fill="#f0f0f0"/><rect x="1" y="14" width="4" height="3" fill="#f0f0f0"/><rect x="6" y="2" width="3" height="3" fill="#f0f0f0"/><rect x="6" y="6" width="3" height="3" fill="#f0f0f0"/><rect x="6" y="10" width="3" height="3" fill="#f0f0f0"/><rect x="6" y="14" width="3" height="3" fill="#f0f0f0"/><rect x="10" y="2" width="4" height="3" fill="#f0f0f0"/><rect x="10" y="6" width="4" height="3" fill="#f0f0f0"/><rect x="10" y="10" width="4" height="3" fill="#f0f0f0"/><rect x="10" y="14" width="4" height="3" fill="#f0f0f0"/><rect x="15" y="2" width="3" height="3" fill="#f0f0f0"/><rect x="15" y="6" width="3" height="3" fill="#f0f0f0"/><rect x="15" y="10" width="3" height="3" fill="#f0f0f0"/><rect x="15" y="14" width="3" height="3" fill="#f0f0f0"/></svg>
<div class="t" style="left:824.0px;top:528px;;transform:scaleX(0.95);transform-origin:0 0">Sales</div>
<svg class="ab" style="left:773px;top:565px" width="9" height="13" viewBox="0 0 9 13"><path d="M1.5 1.5L7 6.5L1.5 11.5" fill="none" stroke="#222" stroke-width="1.7"/></svg>
<svg class="ab" style="left:797px;top:562px" width="23" height="21" viewBox="0 0 23 21"><rect x="0" y="0" width="19" height="18" fill="#4a4a4a"/><rect x="0" y="0" width="19" height="2" fill="#2a2a2a"/><rect x="1" y="2" width="4" height="3" fill="#f0f0f0"/><rect x="1" y="6" width="4" height="3" fill="#f0f0f0"/><rect x="1" y="10" width="4" height="3" fill="#f0f0f0"/><rect x="1" y="14" width="4" height="3" fill="#f0f0f0"/><rect x="6" y="2" width="3" height="3" fill="#f0f0f0"/><rect x="6" y="6" width="3" height="3" fill="#f0f0f0"/><rect x="6" y="10" width="3" height="3" fill="#f0f0f0"/><rect x="6" y="14" width="3" height="3" fill="#f0f0f0"/><rect x="10" y="2" width="4" height="3" fill="#f0f0f0"/><rect x="10" y="6" width="4" height="3" fill="#f0f0f0"/><rect x="10" y="10" width="4" height="3" fill="#f0f0f0"/><rect x="10" y="14" width="4" height="3" fill="#f0f0f0"/><rect x="15" y="2" width="3" height="3" fill="#f0f0f0"/><rect x="15" y="6" width="3" height="3" fill="#f0f0f0"/><rect x="15" y="10" width="3" height="3" fill="#f0f0f0"/><rect x="15" y="14" width="3" height="3" fill="#f0f0f0"/></svg>
<div class="t" style="left:824.0px;top:556px;;transform:scaleX(0.95);transform-origin:0 0">STable</div>
<svg class="ab" style="left:773px;top:593px" width="9" height="13" viewBox="0 0 9 13"><path d="M1.5 1.5L7 6.5L1.5 11.5" fill="none" stroke="#222" stroke-width="1.7"/></svg>
<svg class="ab" style="left:797px;top:590px" width="23" height="21" viewBox="0 0 23 21"><rect x="0" y="0" width="19" height="18" fill="#4a4a4a"/><rect x="0" y="0" width="19" height="2" fill="#2a2a2a"/><rect x="1" y="2" width="4" height="3" fill="#f0f0f0"/><rect x="1" y="6" width="4" height="3" fill="#f0f0f0"/><rect x="1" y="10" width="4" height="3" fill="#f0f0f0"/><rect x="1" y="14" width="4" height="3" fill="#f0f0f0"/><rect x="6" y="2" width="3" height="3" fill="#f0f0f0"/><rect x="6" y="6" width="3" height="3" fill="#f0f0f0"/><rect x="6" y="10" width="3" height="3" fill="#f0f0f0"/><rect x="6" y="14" width="3" height="3" fill="#f0f0f0"/><rect x="10" y="2" width="4" height="3" fill="#f0f0f0"/><rect x="10" y="6" width="4" height="3" fill="#f0f0f0"/><rect x="10" y="10" width="4" height="3" fill="#f0f0f0"/><rect x="10" y="14" width="4" height="3" fill="#f0f0f0"/><rect x="15" y="2" width="3" height="3" fill="#f0f0f0"/><rect x="15" y="6" width="3" height="3" fill="#f0f0f0"/><rect x="15" y="10" width="3" height="3" fill="#f0f0f0"/><rect x="15" y="14" width="3" height="3" fill="#f0f0f0"/></svg>
<div class="t" style="left:824.0px;top:584px;;transform:scaleX(0.95);transform-origin:0 0">Stores</div>
<div class="ab" style="left:700px;top:43px;width:1px;height:574px;background:#a8a8a8"></div>
<div class="ab" style="left:698px;top:617px;width:641px;height:43px;background:#f0f0f0;border-left:1px solid #c8c8c8;border-top:1px solid #a8a8a8;border-bottom:1px solid #d6d6d6"></div>
<div class="ab" style="left:702px;top:618px;width:160px;height:37px;background:#efefef;border:1px solid #d6d6d6;border-top:none"></div>
<svg class="ab" style="left:716px;top:625px" width="24" height="23" viewBox="0 0 24 23"><g fill="#333"><rect x="1" y="1" width="4" height="4"/><rect x="5.5" y="10" width="4" height="4"/><rect x="5.5" y="17" width="4" height="4"/>
<rect x="7.5" y="2.2" width="11" height="1.5"/><rect x="11" y="11.2" width="12" height="1.5"/><rect x="11" y="18.2" width="12" height="1.5"/></g></svg>
<div class="t" style="left:743.0px;top:621px;;transform:scaleX(0.9673);transform-origin:0 0">TOM Explorer</div>
<div class="ab" style="left:1228px;top:618px;width:108px;height:37px;background:#efefef;border:1px solid #d6d6d6;border-top:none"></div>
<svg class="ab" style="left:1244px;top:628px" width="18" height="14" viewBox="0 0 18 14"><rect x="1" y="0.5" width="1.4" height="12" fill="#333"/><path d="M4.5 1.5L12 6.5L4.5 11.5z" fill="#1f5fae"/><rect x="13.6" y="0.5" width="1.6" height="12" fill="#333"/></svg>
<div class="t" style="left:1269.0px;top:621px;;transform:scaleX(0.9653);transform-origin:0 0">Macros</div>
<div class="ab" style="left:698px;top:666px;width:641px;height:8px;background:#dadada;border-left:1px solid #c8c8c8"></div>
<div class="ab" style="left:853px;top:384px;width:373px;height:300px;box-shadow:2px 2px 4px rgba(0,0,0,0.12)"></div>
<div class="ab" style="left:853px;top:384px;width:373px;height:300px;background:#fff;border:1px solid #cccccc"></div>
<div class="ab" style="left:855px;top:453px;width:369px;height:34px;background:#d5e3f8"></div>
<div class="t" style="left:901.5px;top:387px;;transform:scaleX(0.9758);transform-origin:0 0">Update table schema...</div>
<div class="t" style="left:901.5px;top:421px;;transform:scaleX(0.986);transform-origin:0 0">Script DAX</div>
<div class="t" style="left:901.5px;top:455px;;transform:scaleX(0.9573);transform-origin:0 0">Preview data</div>
<div class="t" style="left:901.5px;top:489px;;transform:scaleX(0.9676);transform-origin:0 0">Refresh table</div>
<svg class="ab" style="left:1201px;top:498px" width="7" height="12" viewBox="0 0 7 12"><path d="M0 0.5L6 6L0 11.5z" fill="#222"/></svg>
<div class="t" style="left:901.5px;top:526px;;transform:scaleX(0.9308);transform-origin:0 0">Create</div>
<svg class="ab" style="left:1201px;top:535px" width="7" height="12" viewBox="0 0 7 12"><path d="M0 0.5L6 6L0 11.5z" fill="#222"/></svg>
<div class="t" style="left:901.5px;top:563px;;transform:scaleX(0.9856);transform-origin:0 0">Make invisible</div>
<div class="t" style="left:1142.0px;top:563px;;transform:scaleX(1.0488);transform-origin:0 0">Ctrl+I</div>
<div class="t" style="left:901.5px;top:597px;;transform:scaleX(0.9573);transform-origin:0 0">Batch rename children...</div>
<div class="t" style="left:1118.5px;top:597px;;transform:scaleX(1.0032);transform-origin:0 0">Shift+F2</div>
<div class="t" style="left:901.5px;top:631px;;transform:scaleX(0.9738);transform-origin:0 0">Mark as date table...</div>
<div class="ab" style="left:898px;top:522px;width:325px;height:1px;background:#d7d7d7"></div>
<div class="ab" style="left:898px;top:559px;width:325px;height:1px;background:#d7d7d7"></div>
<div class="ab" style="left:898px;top:664px;width:325px;height:1px;background:#d7d7d7"></div>
<svg class="ab" style="left:862px;top:425px" width="24" height="22" viewBox="0 0 24 22"><path d="M8.6 11.6V1.3H17.4L22.6 6.6V17.6H12.4" fill="#eeeeee" stroke="#333" stroke-width="1.7" stroke-linejoin="round"/><path d="M17.4 1.3V6.6H22.6z" fill="#333" stroke="#333" stroke-width="1.2" stroke-linejoin="round"/><rect x="9.4" y="12" width="3" height="5" fill="#eeeeee"/><circle cx="6.1" cy="17" r="3.6" fill="#fff" stroke="#333" stroke-width="1.7"/><circle cx="6.1" cy="17" r="1.2" fill="#333"/></svg>
<svg class="ab" style="left:862px;top:459px" width="24" height="22" viewBox="0 0 24 22"><rect x="3.4" y="11" width="6.4" height="8.5" fill="#eeeeee"/><rect x="9.8" y="7.5" width="6" height="12" fill="#eeeeee"/><rect x="15.8" y="2.3" width="6.7" height="17.2" fill="#eeeeee"/><path d="M3.4 12.3V19.5H22.5V2.3H15.8V19.5M9.8 9.3V19.5" fill="none" stroke="#333" stroke-width="1.6"/><rect x="15.8" y="2.3" width="6.7" height="3.8" fill="#333"/><circle cx="8.2" cy="4.4" r="3.1" fill="#eeeeee" stroke="#333" stroke-width="1.5"/><path d="M6 6.6L2.6 9.7" stroke="#333" stroke-width="1.7"/></svg>
</body></html>
